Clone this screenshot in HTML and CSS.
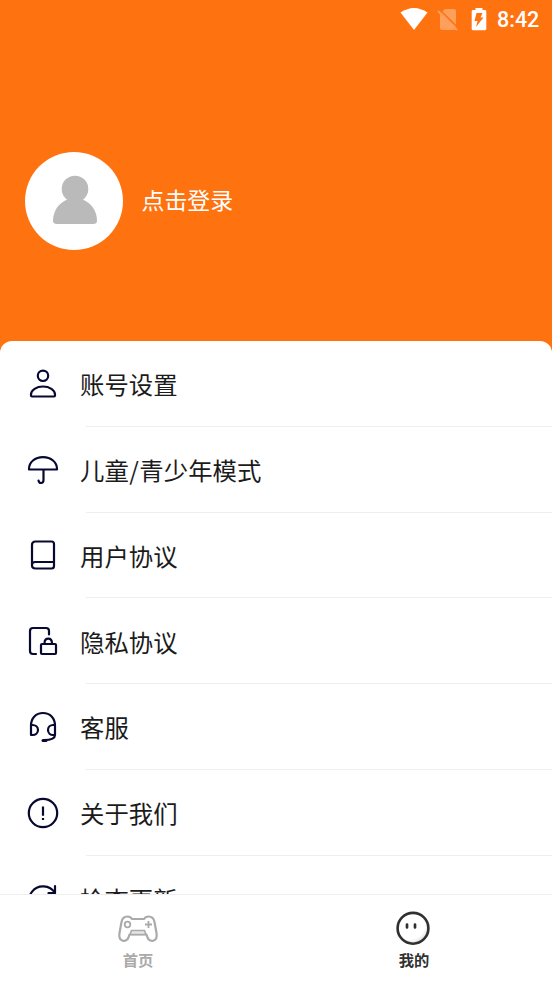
FILE: index.html
```html
<!DOCTYPE html>
<html lang="zh-CN">
<head>
<meta charset="utf-8">
<title>我的</title>
<link rel="stylesheet" href="styles.css">
</head>
<body>
<div class="app">
  <header class="hero">
    <div class="status">
      <svg class="wifi" width="28" height="22" viewBox="0 0 28 22"><path fill="#fff" d="M.5 4.500Q14-4.500 27.500 4.500L14 22Z"/></svg>
      <svg class="sim" width="22" height="24" viewBox="0 0 22 24"><path fill="#ff9f5c" d="M8 1h9q2 0 2 2v18q0 1-1 1H5q-2 0-2-2V6Z"/><path stroke="#ff7210" stroke-width="1.600" d="M2 1l20 20"/><path stroke="#ff9f5c" stroke-width="2" d="M1 3l19 19"/></svg>
      <svg class="battery" width="16" height="23" viewBox="0 0 16 23"><path fill="#fff" d="M4.500 0h7v2H14q1.300 0 1.300 1.300V21q0 1.300-1.300 1.300H2Q.7 22.300.7 21V3.300Q.7 2 2 2h2.500Z"/><path fill="#ff7210" d="M5.500 5h6L9.500 9.500h3L5 19l1.500-6h-3Z"/></svg>
      <span class="clock">8:42</span>
    </div>
    <div class="profile">
      <div class="avatar">
        <svg width="98" height="98" viewBox="0 0 98 98"><circle cx="50" cy="37" r="13.300" fill="#bababa"/><path fill="#bababa" d="M42.500 47.500h15C66.500 51 72 59 72 69q0 3-4 3h-36q-4 0-4-3C28 59 33.500 51 42.500 47.500Z"/></svg>
      </div>
      <span class="login">点击登录</span>
    </div>
  </header>
  <main class="menu">
    <div class="row">
      <svg class="icon" viewBox="0 0 40 40"><circle cx="20" cy="11.800" r="5.200"/><path d="M8 30.500C8 26 13.500 22.500 20 22.500s12 3.500 12 8v1q0 1-1 1H9q-1 0-1-1Z"/></svg>
      <span class="label">账号设置</span>
    </div>
    <div class="row">
      <svg class="icon" viewBox="0 0 40 40"><path d="M6 19.500V19C6 12 12 7.200 20 7.200S34 12 34 19v.5ZM20.500 20v10q0 3-2.500 3-2 0-2.500-2.500"/></svg>
      <span class="label">儿童<span class="slash">/</span>青少年模式</span>
    </div>
    <div class="row">
      <svg class="icon" viewBox="0 0 40 40"><path d="M12.500 6.500h16q2.500 0 2.500 2.500v22q0 2.500-2.500 2.500h-16q-3.500 0-3.500-3V10q0-3.500 3.500-3.500ZM9 29.500q.5-2.500 3-2.500h19"/></svg>
      <span class="label">用户协议</span>
    </div>
    <div class="row">
      <svg class="icon" viewBox="0 0 40 40"><path d="M13 33h-3q-3 0-3-3V10q0-3 3-3h13q3 0 3 3v3.500M19 23h13q1 0 1 1v8q0 1-1 1H19q-1 0-1-1v-8q0-1 1-1ZM21.500 22.500c0-6.500 7.500-6.500 7.500 0"/></svg>
      <span class="label">隐私协议</span>
    </div>
    <div class="row">
      <svg class="icon" viewBox="0 0 40 40"><path d="M8 18.500C8 11 13 6 20 6s12 5 12 12.500V28q0 5-11 5M8 18.500V28h1.500c3 0 5.500-2 5.500-5s-2.500-5-5.500-5H8.500M31.500 18H30c-2.500 0-5 2-5 5s2.500 5 5 5h2"/><path class="heavy" d="M20 33.500h3"/></svg>
      <span class="label">客服</span>
    </div>
    <div class="row">
      <svg class="icon" viewBox="0 0 40 40"><circle cx="20" cy="20" r="14.200"/><path class="butt" d="M20 13.500v9.300M20 25v2"/></svg>
      <span class="label">关于我们</span>
    </div>
    <div class="row">
      <svg class="icon" viewBox="0 0 40 40"><path d="M32 14A14 14 0 1 0 34 20M32 7v7h-6.500"/></svg>
      <span class="label">检查更新</span>
    </div>
  </main>
  <nav class="tabs">
    <div class="tab">
      <svg width="44" height="36" viewBox="0 0 44 36"><path fill="#fff" stroke="#aaa" stroke-width="2.200" stroke-linejoin="round" d="M11.500 5.500Q14.500 5.500 16 8h12Q29.500 5.500 32.500 5.500 37.500 5.500 38.500 11L40.500 22C42 31 33.500 32 31.500 26.500L30.500 23.500h-17L12.500 26.500C10.500 32 2 31 3.500 22L5.500 11Q6.500 5.500 11.500 5.500Z"/><path fill="#e6e6e6" stroke="#aaa" stroke-width="1.600" d="M15.500 19.500h13l1.500 4H14Z"/><g fill="none" stroke="#aaa" stroke-width="1.800"><circle cx="11.500" cy="13.500" r="2.800"/><path d="M32.500 10v7M29 13.500h7"/></g></svg>
      <span>首页</span>
    </div>
    <div class="tab active">
      <svg width="44" height="36" viewBox="0 0 44 36"><defs><radialGradient id="face" cx=".38" cy=".35" r=".68"><stop offset=".75" stop-color="#fff"/><stop offset="1" stop-color="#ddd"/></radialGradient></defs><circle cx="21" cy="17.300" r="15.400" fill="url(#face)" stroke="#303030" stroke-width="2.600"/><path fill="none" stroke="#303030" stroke-width="2.700" stroke-linecap="round" d="M15 13.500v3M23 13.500v3"/></svg>
      <span>我的</span>
    </div>
  </nav>
</div>
</body>
</html>
```
FILE: styles.css
```css
* { box-sizing: border-box; }
body { margin: 0; font-family: "Noto Sans CJK SC", sans-serif; }
.app { height: 981px; display: flex; flex-direction: column; overflow: hidden; background: #ff7210; }
.hero { height: 341px; flex: none; }
.status { height: 40px; padding-right: 12px; display: flex; justify-content: flex-end; align-items: center; }
.wifi { margin-top: -2px; }
.sim { margin-left: 9px; }
.battery { margin: -2px 0 0 12px; }
.clock { width: 43px; margin-left: 10px; color: #fff; font: 500 21.500px/24px Roboto, sans-serif; white-space: nowrap; }
.profile { display: flex; align-items: center; margin: 112px 0 0 24.500px; }
.avatar { width: 98px; height: 98px; border-radius: 50%; background: #fff; }
.avatar svg { display: block; }
.login { margin: -4px 0 0 19px; color: #fff; font-size: 22.900px; line-height: 34px; }
.menu { flex: 1; min-height: 0; overflow: hidden; background: #fff; border-radius: 12px 12px 0 0; }
.row { height: 85.800px; display: flex; align-items: center; padding-left: 23px; background: linear-gradient(#eee, #eee) 86px 100% / 100% 1px no-repeat; }
.icon { width: 40px; height: 40px; flex: none; fill: none; stroke: #070930; stroke-width: 2.200; stroke-linecap: round; stroke-linejoin: round; }
.heavy { stroke-width: 3; }
.butt { stroke-linecap: butt; }
.label { margin-left: 17px; padding-top: .6px; font-size: 24.400px; line-height: 36px; color: #1b1b1b; }
.slash { padding: 0 .5px; }
.tabs { height: 87px; flex: none; display: flex; background: #fff; border-top: 1px solid #eee; }
.tab { flex: 1; display: flex; flex-direction: column; align-items: center; padding-top: 16px; color: #aaa; font-size: 15.300px; line-height: 22px; font-weight: 700; }
.tab span { margin-top: 1px; }
.active { color: #303030; }
```
